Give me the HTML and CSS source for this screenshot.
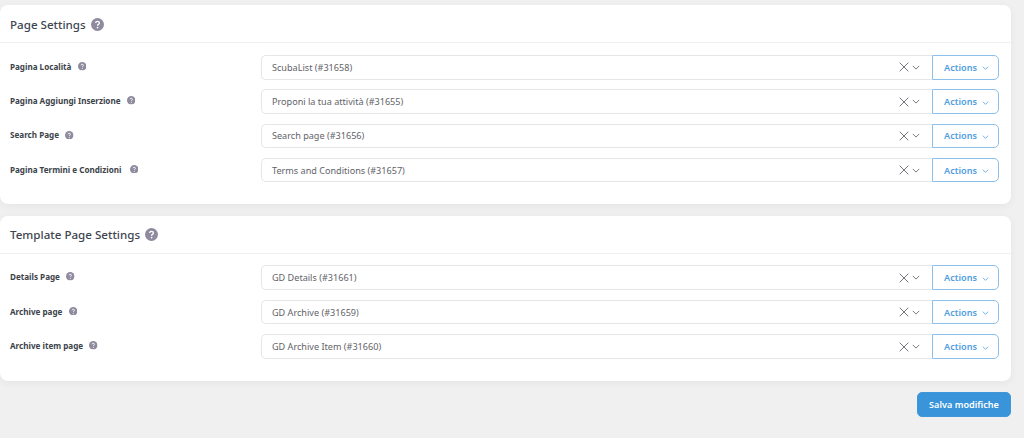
FILE: index.html
```html
<!DOCTYPE html>
<html lang="en">
<head>
<meta charset="utf-8">
<title>Page Settings</title>
<link rel="stylesheet" href="styles.css">
</head>
<body>
<svg class="sprite" width="0" height="0" aria-hidden="true">
  <symbol id="q" viewBox="0 0 16 16"><circle cx="8" cy="8" r="8" fill="#8f8a9e"/><path d="M5.7 6.2C5.8 4.9 6.8 4.2 8 4.2c1.300 0 2.300.8 2.300 2 0 1.700-2.200 1.700-2.200 3.200" fill="none" stroke="#fff" stroke-width="1.700"/><circle cx="8.100" cy="11.800" r="1.100" fill="#fff"/></symbol>
  <symbol id="x" viewBox="0 0 10 10"><path d="M.7.7l8.600 8.600M9.300.7L.7 9.300" fill="none" stroke="currentColor" stroke-width="1"/></symbol>
  <symbol id="c" viewBox="0 0 10 6"><path d="M1 1l4 4 4-4" fill="none" stroke="currentColor" stroke-width="1.200"/></symbol>
</svg>
<main class="page">
  <section class="card first">
    <h2 class="card-title">Page Settings <svg class="help big"><use href="#q"/></svg></h2>
    <div class="rows">
      <div class="row"><label class="label">Pagina Località <svg class="help"><use href="#q"/></svg></label><div class="select"><span class="value">ScubaList (#31658)</span><svg class="clear"><use href="#x"/></svg><svg class="caret"><use href="#c"/></svg></div><button class="actions">Actions <svg class="act-caret"><use href="#c"/></svg></button></div>
      <div class="row"><label class="label">Pagina Aggiungi Inserzione <svg class="help"><use href="#q"/></svg></label><div class="select"><span class="value">Proponi la tua attività (#31655)</span><svg class="clear"><use href="#x"/></svg><svg class="caret"><use href="#c"/></svg></div><button class="actions">Actions <svg class="act-caret"><use href="#c"/></svg></button></div>
      <div class="row"><label class="label">Search Page <svg class="help"><use href="#q"/></svg></label><div class="select"><span class="value">Search page (#31656)</span><svg class="clear"><use href="#x"/></svg><svg class="caret"><use href="#c"/></svg></div><button class="actions">Actions <svg class="act-caret"><use href="#c"/></svg></button></div>
      <div class="row"><label class="label">Pagina Termini e Condizioni&nbsp; <svg class="help"><use href="#q"/></svg></label><div class="select"><span class="value">Terms and Conditions (#31657)</span><svg class="clear"><use href="#x"/></svg><svg class="caret"><use href="#c"/></svg></div><button class="actions">Actions <svg class="act-caret"><use href="#c"/></svg></button></div>
    </div>
  </section>
  <section class="card second">
    <h2 class="card-title">Template Page Settings <svg class="help big"><use href="#q"/></svg></h2>
    <div class="rows">
      <div class="row"><label class="label">Details Page <svg class="help"><use href="#q"/></svg></label><div class="select"><span class="value">GD Details (#31661)</span><svg class="clear"><use href="#x"/></svg><svg class="caret"><use href="#c"/></svg></div><button class="actions">Actions <svg class="act-caret"><use href="#c"/></svg></button></div>
      <div class="row"><label class="label">Archive page <svg class="help"><use href="#q"/></svg></label><div class="select"><span class="value">GD Archive (#31659)</span><svg class="clear"><use href="#x"/></svg><svg class="caret"><use href="#c"/></svg></div><button class="actions">Actions <svg class="act-caret"><use href="#c"/></svg></button></div>
      <div class="row"><label class="label">Archive item page <svg class="help"><use href="#q"/></svg></label><div class="select"><span class="value">GD Archive Item (#31660)</span><svg class="clear"><use href="#x"/></svg><svg class="caret"><use href="#c"/></svg></div><button class="actions">Actions <svg class="act-caret"><use href="#c"/></svg></button></div>
    </div>
  </section>
  <div class="footer"><button class="save">Salva modifiche</button></div>
</main>
</body>
</html>
```
FILE: styles.css
```css
* { box-sizing: border-box; }
html, body { margin: 0; height: 100%; overflow: hidden; }
body { background: #f0f0f0; font-family: "Noto Sans", sans-serif; color: #3c434a; }
.sprite { position: absolute; }
.page { padding: 5px 13px 0 0; display: flex; flex-direction: column; gap: 11.500px; }
.card { background: #fff; border-radius: 8px; box-shadow: 0 2px 8px rgba(0,0,0,.05); }
.card-title { margin: 0; height: 38px; padding: 1px 10px 0; display: flex; align-items: center; gap: 5px; font-size: 11.600px; font-weight: 500; color: #3d4550; border-bottom: 1px solid #f0f0f1; }
.help { width: 8.500px; height: 8.500px; flex: none; }
.help.big { width: 13px; height: 13px; }
.rows { padding: 12px 12px 22px 10px; display: flex; flex-direction: column; gap: 9.800px; }
.second .rows { padding-top: 11.500px; gap: 10px; }
.row { display: flex; align-items: stretch; height: 24.500px; }
.label { width: 251px; flex: none; display: flex; align-items: center; gap: 4px; font-size: 8.100px; font-weight: 700; color: #3c434a; white-space: pre; padding-bottom: 2px; }
.select { flex: 1; display: flex; align-items: center; padding: 0 12px 0 10px; border: 1px solid #e5e5ea; border-radius: 5px 0 0 5px; border-right: 0; background: #fff; }
.value { flex: 1; font-size: 9.100px; color: #5f6368; }
.clear { width: 10px; height: 10px; color: #74747c; margin-right: 3px; }
.caret { width: 8px; height: 5px; color: #74747c; }
.actions { width: 67px; flex: none; display: flex; align-items: center; justify-content: center; gap: 5px; padding: 0 0 0 2px; border: 1px solid #8cc0ea; border-radius: 0 5px 5px 0; background: #fff; color: #4f9ede; font: 600 9.100px "Noto Sans", sans-serif; }
.act-caret { width: 7px; height: 4px; margin-top: 2px; }
.footer { display: flex; justify-content: flex-end; }
.save { width: 94px; height: 25px; border: 1px solid #3f96d8; border-radius: 5px; background: #3a94d9; color: #fff; font: 600 9.100px "Noto Sans", sans-serif; padding: 0; }
```
